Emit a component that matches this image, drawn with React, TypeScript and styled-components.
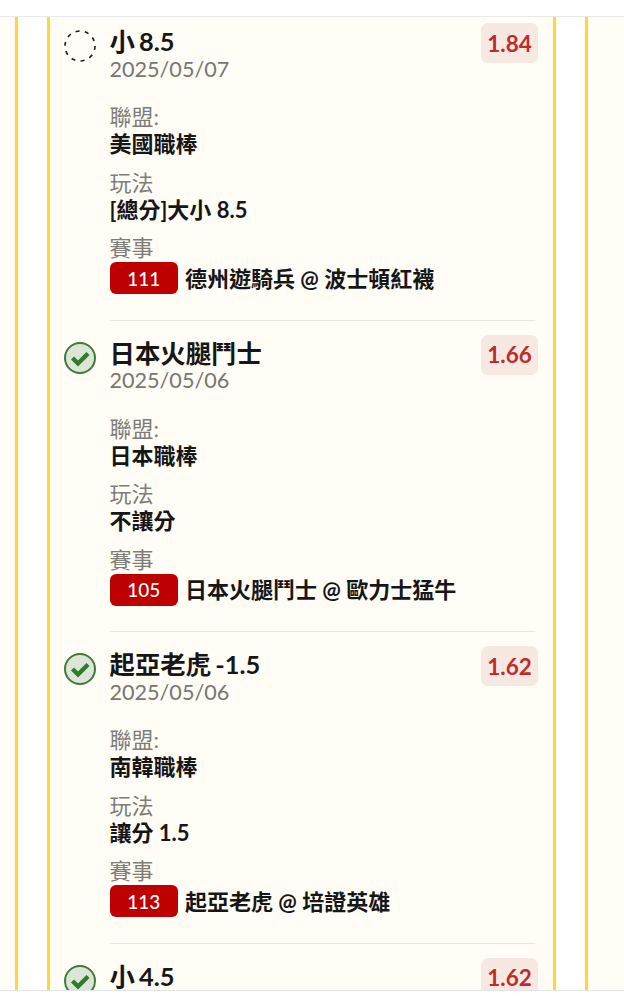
import React from "react";
import styled, { createGlobalStyle } from "styled-components";

const Global = createGlobalStyle`
  html, body { margin: 0; padding: 0; background: #fff; }
  * { box-sizing: border-box; }
`;

const Page = styled.div`
  width: 624px;
  height: 1000px;
  display: flex;
  flex-direction: column;
  font-family: Lato, "Noto Sans CJK TC", sans-serif;
  background: #fff;
`;
const TopBar = styled.div`
  height: 17px;
  flex: none;
  border-bottom: 1px solid #e9e9e9;
`;
const BottomBar = styled.div`
  height: 10px;
  flex: none;
  border-top: 1px solid #e4e4e4;
`;
const Viewport = styled.div`
  flex: 1;
  min-height: 0;
  overflow: hidden;
  display: flex;
  background: #fffdf6;
  padding: 0 36px 0 15px;
`;
const Outer = styled.div`
  flex: 1;
  display: flex;
  background: #fff;
  padding: 0 29px;
  border-left: 3px solid #fdd835;
  border-right: 3px solid #fdd835;
`;
const Card = styled.div`
  flex: 1;
  background: #fffdf6;
  border-left: 3px solid #fdd835;
  border-right: 3px solid #fdd835;
  padding: 0 15px 0 14px;
`;
const List = styled.div`
  margin-top: -8px;
`;
const Item = styled.div`
  display: grid;
  grid-template-columns: 32px 1fr;
  column-gap: 13.5px;
  padding-top: 14px;
  height: 311.5px;
`;
const IconCell = styled.div`
  padding-top: 7px;
`;
const Body = styled.div<{ $last?: boolean }>`
  border-bottom: ${(p) => (p.$last ? "none" : "1px solid #e8e6df")};
  margin-right: 3px;
`;
const Head = styled.div`
  display: flex;
  justify-content: space-between;
  align-items: flex-start;
  margin-right: -3px;
`;
const Title = styled.div`
  font-size: 25.4px;
  font-weight: 700;
  line-height: 27.5px;
  padding-top: 5px;
  color: #161616;
  word-spacing: -2px;
`;
const DateText = styled.div`
  font-size: 21.6px;
  line-height: 27.5px;
  color: #787671;
`;
const Odds = styled.div`
  width: 57px;
  height: 40px;
  border-radius: 7px;
  background: #f7e8e2;
  color: #bd2c2a;
  font-size: 22.5px;
  font-weight: 700;
  display: flex;
  align-items: center;
  justify-content: center;
`;
const Group = styled.div`
  margin-top: 11.5px;
`;
const FirstGroup = styled(Group)`
  margin-top: 20px;
`;
const Label = styled.div`
  font-size: 22px;
  line-height: 27px;
  color: #7f7d78;
`;
const Value = styled.div`
  font-size: 22px;
  font-weight: 700;
  line-height: 27px;
  color: #161616;
`;
const EventRow = styled.div`
  display: flex;
  align-items: center;
  gap: 7px;
  margin-top: 1px;
`;
const Chip = styled.div`
  width: 68.5px;
  height: 32px;
  border-radius: 6px;
  background: #bd0000;
  color: #fff;
  font-size: 19px;
  font-weight: 500;
  display: flex;
  align-items: center;
  justify-content: center;
`;

const Pending = () => (
  <svg width="32" height="32" viewBox="0 0 32 32" fill="none">
    <circle cx="16" cy="16" r="15" stroke="#1c1c1c" strokeWidth="1.6" strokeDasharray="4 5.4" />
  </svg>
);
const Won = () => (
  <svg width="32" height="32" viewBox="0 0 32 32" fill="none">
    <circle cx="16" cy="16" r="15" fill="#dce5d6" stroke="#3f7a3d" strokeWidth="2" />
    <path d="M8.5 16 L14 21.5 L24 11.5" stroke="#2c7d2c" strokeWidth="4.4" strokeLinejoin="miter" />
  </svg>
);

type Row = {
  won: boolean;
  title: string;
  date: string;
  odds: string;
  league: string;
  play: string;
  no: string;
  match: string;
};
const rows: Row[] = [
  { won: false, title: "小 8.5", date: "2025/05/07", odds: "1.84", league: "美國職棒", play: "[總分]大小 8.5", no: "111", match: "德州遊騎兵 @ 波士頓紅襪" },
  { won: true, title: "日本火腿鬥士", date: "2025/05/06", odds: "1.66", league: "日本職棒", play: "不讓分", no: "105", match: "日本火腿鬥士 @ 歐力士猛牛" },
  { won: true, title: "起亞老虎 -1.5", date: "2025/05/06", odds: "1.62", league: "南韓職棒", play: "讓分 1.5", no: "113", match: "起亞老虎 @ 培證英雄" },
  { won: true, title: "小 4.5", date: "2025/05/06", odds: "1.62", league: "南韓職棒", play: "大小 4.5", no: "113", match: "起亞老虎 @ 培證英雄" },
];

export default function App() {
  return (
    <Page>
      <Global />
      <TopBar />
      <Viewport>
        <Outer>
          <Card>
            <List>
              {rows.map((r, i) => (
                <Item key={i}>
                  <IconCell>{r.won ? <Won /> : <Pending />}</IconCell>
                  <Body $last={i === rows.length - 1}>
                    <Head>
                      <div>
                        <Title>{r.title}</Title>
                        <DateText>{r.date}</DateText>
                      </div>
                      <Odds>{r.odds}</Odds>
                    </Head>
                    <FirstGroup>
                      <Label>聯盟:</Label>
                      <Value>{r.league}</Value>
                    </FirstGroup>
                    <Group>
                      <Label>玩法</Label>
                      <Value>{r.play}</Value>
                    </Group>
                    <Group>
                      <Label>賽事</Label>
                      <EventRow>
                        <Chip>{r.no}</Chip>
                        <Value>{r.match}</Value>
                      </EventRow>
                    </Group>
                  </Body>
                </Item>
              ))}
            </List>
          </Card>
        </Outer>
      </Viewport>
      <BottomBar />
    </Page>
  );
}
